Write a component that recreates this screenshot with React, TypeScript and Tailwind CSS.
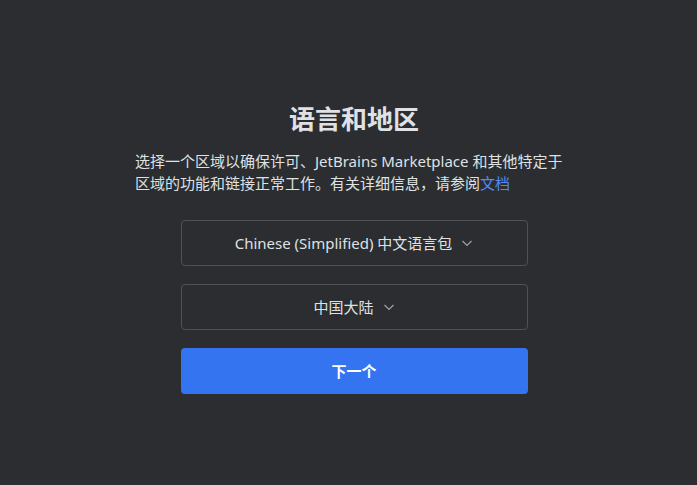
const font = {
  fontFamily: '"Segoe UI", "Noto Sans", "Noto Sans CJK SC", sans-serif',
};

function Chevron() {
  return (
    <svg width="12" height="12" viewBox="0 0 12 12" fill="none" className="ml-[9px]">
      <path d="M1.5 4L6 8.5L10.5 4" stroke="#9da0a8" strokeWidth="1.2" />
    </svg>
  );
}

export default function App() {
  return (
    <div
      className="w-[697px] h-[485px] pl-[11px] bg-[#2b2d30] text-[#dfe1e5] flex flex-col items-center"
      style={font}
    >
      <h1 className="mt-[101px] text-[26px] leading-[36px] font-bold text-[#dfe1e5]">语言和地区</h1>
      <p className="mt-[13px] w-[438px] text-[15px] leading-[22px] text-[#dfe1e5]">
        选择一个区域以确保许可、JetBrains Marketplace 和其他特定于区域的功能和链接正常工作。有关详细信息，请参阅
        <span className="text-[#548af7]">文档</span>
      </p>
      <div className="mt-[26px] w-[347px] flex flex-col gap-[18px]">
        <button className="h-[46px] rounded-[4px] border border-[#4e5157] flex items-center justify-center text-[15px] text-[#dfe1e5]">
          Chinese (Simplified) 中文语言包
          <Chevron />
        </button>
        <button className="h-[46px] rounded-[4px] border border-[#4e5157] flex items-center justify-center text-[15px] text-[#dfe1e5]">
          中国大陆
          <Chevron />
        </button>
        <button className="h-[46px] rounded-[4px] bg-[#3574f0] flex items-center justify-center text-[15px] font-bold text-white">
          下一个
        </button>
      </div>
    </div>
  );
}
